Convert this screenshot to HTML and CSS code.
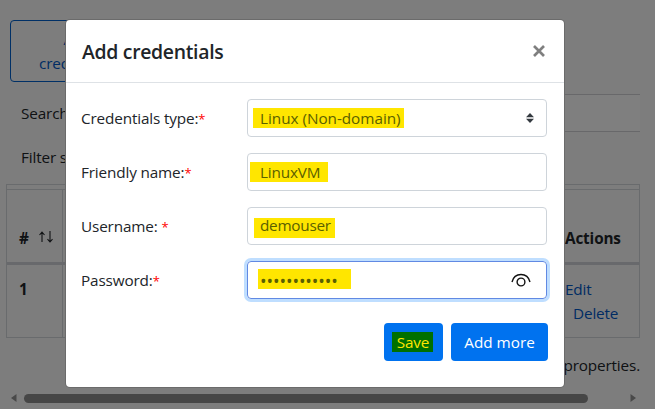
FILE: index.html
```html
<!DOCTYPE html>
<html lang="en">
<head>
<meta charset="utf-8">
<title>Add credentials</title>
<link rel="stylesheet" href="styles.css">
</head>
<body>
<main class="page">
  <button class="outline-button">Add<br>credentials</button>
  <div class="search-row"><span>Search</span><div class="search-input"></div></div>
  <div class="filter-row">Filter s</div>
  <div class="table">
    <div class="table-head">
      <div class="cell-num"><b>#</b>
        <svg class="sort" width="16" height="13" viewBox="0 0 16 13" fill="none" stroke="currentColor" stroke-width="1.1"><path d="M4 11V1.500M1.500 4L4 1.200L6.500 4M12 0V10.500M9.500 8.200L12 11L14.500 8.200"/></svg>
      </div>
      <div class="cell-actions"><b>Actions</b></div>
    </div>
    <div class="table-row">
      <div class="cell-num"><b>1</b></div>
      <div class="cell-actions"><a>Edit</a><a class="delete">Delete</a></div>
    </div>
  </div>
  <p class="note">properties.</p>
  <div class="scrollbar">
    <svg width="6" height="8" viewBox="0 0 6 8"><path d="M5.500 0V8L0 4Z" fill="currentColor"/></svg>
    <div class="thumb"></div>
    <svg width="6" height="8" viewBox="0 0 6 8"><path d="M.5 0V8L6 4Z" fill="currentColor"/></svg>
  </div>
</main>
<div class="backdrop"></div>
<section class="modal" role="dialog">
  <header class="modal-head">
    <h1>Add credentials</h1>
    <svg width="12" height="12" viewBox="0 0 12 12" stroke="#7f7f7f" stroke-width="2.700"><path d="M1 1L11 11M11 1L1 11"/></svg>
  </header>
  <div class="modal-body">
    <div class="field"><label>Credentials type:<i>*</i></label>
      <div class="input"><span class="value v-type">Linux (Non-domain)</span>
        <svg class="updown" width="8" height="10" viewBox="0 0 8 10" fill="#343a40"><path d="M4 0L8 4.200H0ZM0 5.800H8L4 10Z"/></svg></div></div>
    <div class="field"><label>Friendly name:<i>*</i></label>
      <div class="input"><span class="value v-name">LinuxVM</span></div></div>
    <div class="field"><label>Username: <i>*</i></label>
      <div class="input"><span class="value v-user">demouser</span></div></div>
    <div class="field"><label>Password:<i>*</i></label>
      <div class="input focused"><span class="value v-pass">••••••••••••</span>
        <svg class="eye" width="20" height="14" viewBox="0 0 20 14" fill="none" stroke="#111" stroke-width="1.4"><path d="M1 9C2.200 4.200 5.600 1.500 10 1.500S17.800 4.200 19 9"/><circle cx="10" cy="9" r="3.900"/></svg></div></div>
    <footer class="buttons">
      <button class="primary save"><span>Save</span></button>
      <button class="primary more">Add more</button>
    </footer>
  </div>
</section>
</body>
</html>
```
FILE: styles.css
```css
* { box-sizing: border-box; }
html, body { margin: 0; height: 100%; overflow: hidden; }
body {
  font: 15.3px/24px "Open Sans", "Noto Sans", sans-serif;
  letter-spacing: -0.15px;
  color: #212529;
  background: #fbfbfb;
}
button { font: inherit; letter-spacing: inherit; }
.page { padding: 20px 15px 0 6px; height: 409px; display: flex; flex-direction: column; }
.outline-button {
  width: 135px; height: 62px; margin-left: 4px; padding: 0;
  color: #0058c8; background: none; border: 1px solid #0060cc; border-radius: 4px;
}
.search-row { display: flex; align-items: center; margin: 12px 0 0 15px; height: 38px; gap: 10px; }
.search-input { flex: 1; height: 38px; border: 1px solid #d0d0d4; border-right: 0; background: #fff; }
.filter-row { margin: 13px 0 0 15px; height: 39px; line-height: 24px; }
.table { border: 1px solid #d3d6da; padding-top: 4px; height: 154px; }
.table-head, .table-row { display: flex; justify-content: space-between; }
.table-head { height: 76px; border-top: 1px solid #d3d6da; border-bottom: 3px solid #d0d3d8; }
.table-row { height: 72px; }
.cell-num { width: 56px; padding: 12px 0 0 12px; border-right: 1px solid #d3d6da; }
.cell-actions { width: 74px; padding-top: 12px; }
.table-head .cell-num { display: flex; padding-top: 36px; gap: 9px; }
.table-head .cell-actions { padding-top: 36px; }
.sort { margin-top: 5px; }
.cell-actions a { display: block; color: #0058c8; }
.cell-actions .delete { margin-left: 8px; }
.note { margin: 15px 0 0; text-align: right; }
.scrollbar { display: flex; align-items: center; height: 14px; margin: 14px 0 0 5px; color: #929292; }
.thumb { width: 564px; height: 9px; margin: 0 42px 0 7px; border-radius: 5px; background: #8c8c8c; flex: none; }
.scrollbar svg { flex: none; }
.backdrop { position: absolute; inset: 0; background: rgba(0, 0, 0, .5); }
.modal {
  position: absolute; left: 66px; top: 20px; width: 498px; height: 367px;
  background: #fff; border-radius: 4px; box-shadow: 0 0 0 1px #6b6b6b;
}
.modal-head {
  height: 63px; padding: 0 19px 0 16px; border-bottom: 1px solid #dee2e6;
  display: flex; align-items: center; justify-content: space-between;
}
h1 { margin: 2px 0 0; font-size: 19.4px; font-weight: 600; letter-spacing: -0.3px; }
.modal-body { padding: 16px 16px 0 15px; }
.field { display: flex; align-items: center; height: 38px; margin-bottom: 16px; }
.field label { width: 166px; flex: none; white-space: nowrap; }
.field i { color: #f00; font-style: normal; font-size: 13px; line-height: 1; }
.input {
  width: 300px; height: 38px; border: 1px solid #ced4da; border-radius: 4px;
  display: flex; align-items: center; justify-content: space-between;
}
.focused { border-color: #6189e3; box-shadow: 0 0 0 3px #bfdeff; }
.value { height: 20px; line-height: 20px; color: #5b6000; background: #ffe600; white-space: nowrap; }
.v-type { width: 151px; margin-left: 5px; padding-left: 7px; letter-spacing: -0.03px; }
.v-name { width: 78px; margin-left: 2px; padding-left: 10px; }
.v-user { width: 81px; margin: 4px 0 0 6px; padding-left: 6px; line-height: 15px; letter-spacing: -0.25px; }
.v-pass { width: 93px; margin: -2px 0 0 10px; padding-left: 2px; font-size: 17.5px; line-height: 24px; letter-spacing: -0.1px; }
.updown { margin-right: 12px; }
.eye { margin-right: 15px; }
.buttons { display: flex; justify-content: flex-end; gap: 8px; padding-top: 8px; }
.primary { height: 38px; padding: 0; border: 0; border-radius: 4px; background: #0072ef; color: #fff; }
.save { width: 59px; }
.save span { display: block; width: 41px; height: 20px; line-height: 21px; margin: -1px 0 0 8px; padding-left: 1px; background: #007000; color: #ffe600; }
.more { width: 97px; letter-spacing: 0; }
```
